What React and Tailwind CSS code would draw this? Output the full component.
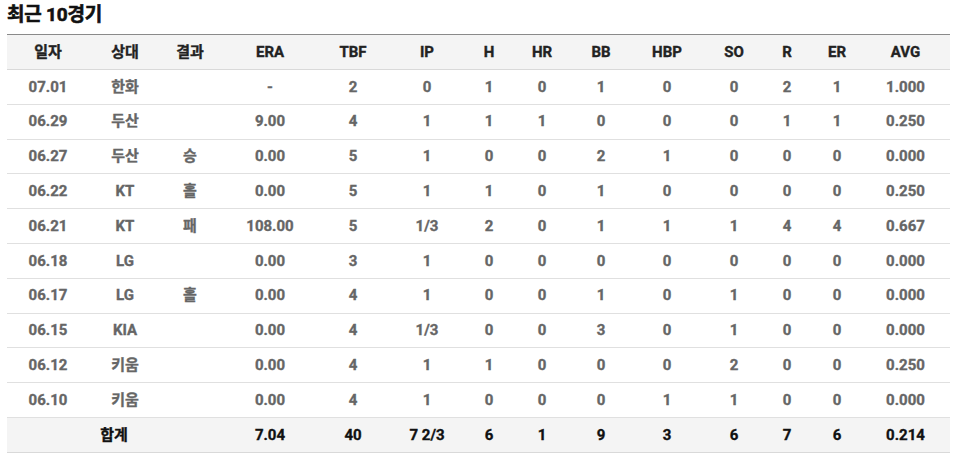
import React from "react";

const cols = [
  ["일자", 82], ["상대", 72], ["결과", 58], ["ERA", 102], ["TBF", 64], ["IP", 84], ["H", 40],
  ["HR", 66], ["BB", 52], ["HBP", 80], ["SO", 54], ["R", 52], ["ER", 48], ["AVG", 89],
];

const rows = [
  ["07.01", "한화", "", "-", "2", "0", "1", "0", "1", "0", "0", "2", "1", "1.000"],
  ["06.29", "두산", "", "9.00", "4", "1", "1", "1", "0", "0", "0", "1", "1", "0.250"],
  ["06.27", "두산", "승", "0.00", "5", "1", "0", "0", "2", "1", "0", "0", "0", "0.000"],
  ["06.22", "KT", "홀", "0.00", "5", "1", "1", "0", "1", "0", "0", "0", "0", "0.250"],
  ["06.21", "KT", "패", "108.00", "5", "1/3", "2", "0", "1", "1", "1", "4", "4", "0.667"],
  ["06.18", "LG", "", "0.00", "3", "1", "0", "0", "0", "0", "0", "0", "0", "0.000"],
  ["06.17", "LG", "홀", "0.00", "4", "1", "0", "0", "1", "0", "1", "0", "0", "0.000"],
  ["06.15", "KIA", "", "0.00", "4", "1/3", "0", "0", "3", "0", "1", "0", "0", "0.000"],
  ["06.12", "키움", "", "0.00", "4", "1", "1", "0", "0", "0", "2", "0", "0", "0.250"],
  ["06.10", "키움", "", "0.00", "4", "1", "0", "0", "0", "1", "1", "0", "0", "0.000"],
];

const total = ["합계", "7.04", "40", "7 2/3", "6", "1", "9", "3", "6", "7", "6", "0.214"];

export default function App() {
  return (
    <div className="bg-white w-[953px] h-[460px] px-[7px] pt-[3px]" style={{ fontFamily: "Roboto, 'Noto Sans CJK KR', sans-serif" }}>
      <h2 className="text-[19px] leading-[24px] font-bold text-[#111] h-[31px] tracking-[-0.2px] [-webkit-text-stroke:0.6px_#111]">최근 10경기</h2>
      <table className="table-fixed border-collapse w-[943px] text-[15px] font-bold [-webkit-text-stroke:0.35px_currentColor]">
        <colgroup>
          {cols.map(([n, w]) => (
            <col key={n} style={{ width: w }} />
          ))}
        </colgroup>
        <thead>
          <tr className="bg-[#f4f4f4] border-t border-[#8a8a8a] border-b border-b-[#d9d9d9] h-[35px]">
            {cols.map(([n]) => (
              <th key={n} className="text-center text-[#222] font-bold p-0">{n}</th>
            ))}
          </tr>
        </thead>
        <tbody>
          {rows.map((r, i) => (
            <tr key={i} className="border-b border-[#e0e0e0] h-[34.8px]">
              {r.map((c, j) => (
                <td key={j} className="text-center text-[#666] p-0">{c}</td>
              ))}
            </tr>
          ))}
          <tr className="bg-[#f4f4f4] border-b border-[#d9d9d9] h-[35px]">
            <td colSpan={2} className="text-center text-[#111] p-0 pl-[60px]">{total[0]}</td>
            <td className="p-0"></td>
            {total.slice(1).map((c, j) => (
              <td key={j} className="text-center text-[#111] p-0">{c}</td>
            ))}
          </tr>
        </tbody>
      </table>
    </div>
  );
}
